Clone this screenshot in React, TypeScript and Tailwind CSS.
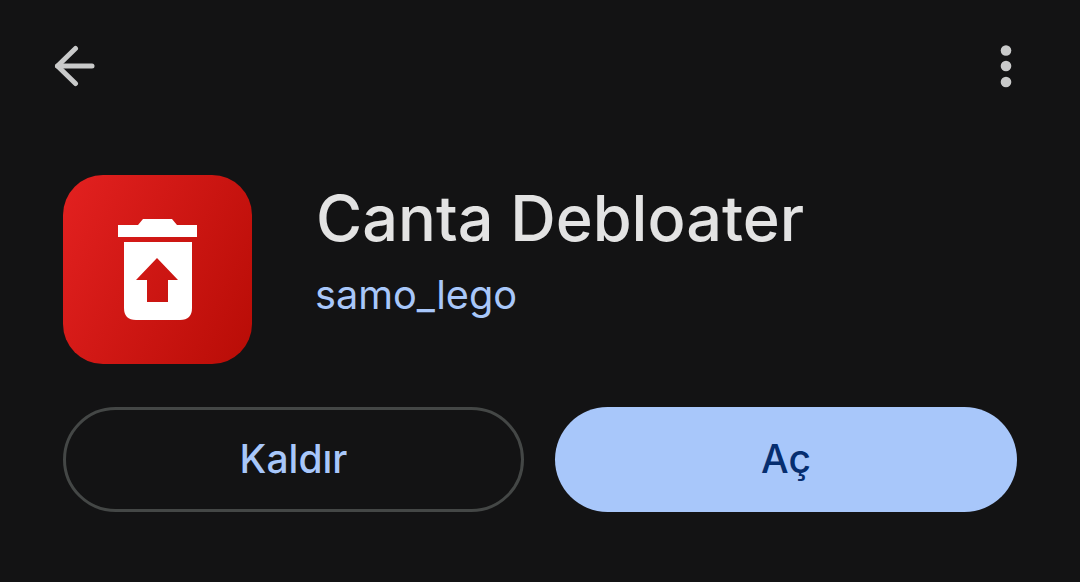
export default function App() {
  return (
    <div className="w-[1080px] h-[582px] overflow-hidden bg-[#131314] flex flex-col pl-[63px] pr-[63px]" style={{ fontFamily: 'Inter, "Noto Sans", Roboto, sans-serif' }}>
      <div className="h-[175px] pt-[44px] flex items-start justify-between shrink-0">
        <svg width="44" height="44" viewBox="0 0 44 44" className="-ml-[9px]" fill="none" stroke="#c9caca" strokeWidth="5" strokeLinecap="round" strokeLinejoin="round">
          <path d="M3.500 22H38" />
          <path d="M21.500 4.500L3.500 22L21.500 39.500" />
        </svg>
        <svg width="12" height="44" viewBox="0 0 12 44" className="mr-[5px]" fill="#c9caca">
          <circle cx="6" cy="6.500" r="5.300" />
          <circle cx="6" cy="22" r="5.300" />
          <circle cx="6" cy="38" r="5.300" />
        </svg>
      </div>
      <div className="flex items-start gap-[64px] h-[232px] shrink-0">
        <div className="w-[189px] h-[189px] rounded-[40px] bg-[linear-gradient(115deg,#e32120,#b80c06)] flex items-center justify-center shrink-0">
          <svg width="79" height="101" viewBox="0 0 79 101">
            <path d="M0 6H20L25 0H54L59 6H79V18H0Z" fill="#fff" />
            <path fillRule="evenodd" d="M6 23H74V89Q74 101 62 101H18Q6 101 6 89ZM39 39L18 61H29V83H50V61H60Z" fill="#fff" />
          </svg>
        </div>
        <div className="flex flex-col pt-[5px]">
          <span className="text-[63px] leading-[76px] text-[#e3e3e3] font-medium">Canta Debloater</span>
          <span className="text-[39.700px] leading-[46px] mt-[16px] -ml-[1px] text-[#a8c7fa]">samo_lego</span>
        </div>
      </div>
      <div className="flex gap-[31px] h-[105px] shrink-0">
        <button className="w-[461px] h-[105px] rounded-full border-[3px] border-[#444746] text-[#a8c7fa] text-[39px] font-medium flex items-center justify-center">Kaldır</button>
        <button className="w-[462px] h-[105px] rounded-full bg-[#a8c7fa] text-[#062e6f] text-[39px] font-medium flex items-center justify-center">Aç</button>
      </div>
    </div>
  );
}
